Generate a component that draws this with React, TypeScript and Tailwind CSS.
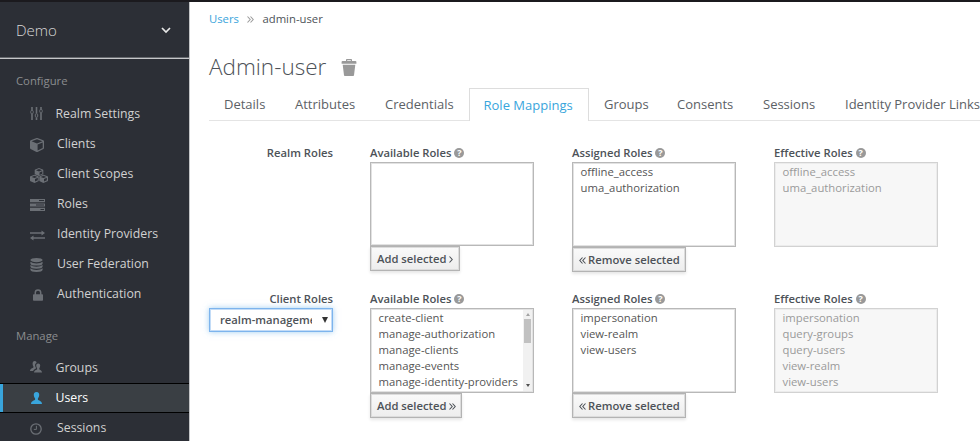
import React from "react";

type IconProps = { className?: string };

const Sliders = ({ className }: IconProps) => (
  <svg className={className} width="13" height="13" viewBox="0 0 13 13" fill="none" stroke="currentColor">
    <path d="M2 0v3.2M2 7v6M6.5 0v6.6M6.5 10.4V13M11 0v2.2M11 6v7" strokeWidth="1.6" />
    <rect x=".8" y="3.4" width="2.4" height="3.4" rx="1" />
    <rect x="5.3" y="6.8" width="2.4" height="3.4" rx="1" />
    <rect x="9.8" y="2.4" width="2.4" height="3.4" rx="1" />
  </svg>
);

const Cube = ({ className }: IconProps) => (
  <svg className={className} width="14" height="14" viewBox="0 0 14 14">
    <path
      fill="currentColor"
      fillRule="evenodd"
      d="M6.6.1q.4-.2.8 0l5.9 2.2q.7.3.7 1v6.8q0 .6-.6.9l-5.9 2.9q-.5.2-1 0L.6 11Q0 10.7 0 10.1V3.300q0-.7.7-1zM7 1.300L1.600 3.300 7 5.400l5.400-2.100zM7.600 6.500v5.900l5.100-2.500V4.500z"
    />
  </svg>
);

const Cubes = ({ className }: IconProps) => (
  <svg className={className} width="18" height="15" viewBox="0 0 18 15" fill="currentColor" fillRule="evenodd">
    <path d="M9 0l3.800 1.500q.5.200.5.700v4L9 8 4.700 6.200v-4q0-.5.500-.7zM9 1.100L6 2.300l3 1.200 3-1.200zM9.500 4.400v2.500l2.800-1.200V3.200z" />
    <path d="M4.600 6.700l3.700 1.500q.4.200.4.600v3.700q0 .5-.4.700L4.600 15 .5 13.200q-.5-.2-.5-.7V8.800q0-.5.500-.6zM4.500 7.800l-2.900 1.100 2.900 1.200 2.900-1.200zM5 11v2.600l2.800-1.300V9.800z" />
    <path d="M13.400 6.700l4.100 1.500q.5.200.5.600v3.700q0 .5-.5.700L13.400 15l-3.700-1.800q-.4-.2-.4-.7V8.800q0-.5.400-.6zM13.500 7.800l-2.900 1.100 2.900 1.200 2.900-1.200zM14 11v2.600l2.800-1.300V9.800z" />
  </svg>
);

const Bars = ({ className }: IconProps) => (
  <svg className={className} width="15" height="12" viewBox="0 0 15 12" fill="currentColor" fillRule="evenodd">
    <path d="M0 0h15v3.200H0zM9 1.100v1h5v-1zM0 4.400h15v3.200H0zM6 5.500v1h8v-1zM0 8.800h15V12H0zM10.500 9.900v1H14v-1z" />
  </svg>
);

const Exchange = ({ className }: IconProps) => (
  <svg className={className} width="15" height="11" viewBox="0 0 15 11" fill="currentColor">
    <path d="M0 2.300h11.500V.5L15 3l-3.500 2.500V3.700H0zM15 7.300H3.500V5.500L0 8l3.500 2.500V8.700H15z" />
  </svg>
);

const Database = ({ className }: IconProps) => (
  <svg className={className} width="13" height="14" viewBox="0 0 13 14" fill="currentColor">
    <ellipse cx="6.500" cy="2.100" rx="6.100" ry="2.100" />
    <path d="M.4 3.800q2 1.700 6.100 1.700t6.100-1.700v1.600q-.4 2.200-6.100 2.200T.4 5.400zM.4 7q2 1.700 6.100 1.700T12.600 7v1.600q-.4 2.200-6.100 2.200T.4 8.600zM.4 10.200q2 1.700 6.100 1.700t6.100-1.700v1.600q-.4 2.200-6.100 2.200T.4 11.800z" />
  </svg>
);

const Lock = ({ className }: IconProps) => (
  <svg className={className} width="10" height="12" viewBox="0 0 10 12">
    <path d="M2.300 6V3.600a2.700 2.700 0 0 1 5.400 0V6" fill="none" stroke="currentColor" strokeWidth="1.500" />
    <rect x="0" y="5.200" width="10" height="6.600" rx=".8" fill="currentColor" />
  </svg>
);

const User = ({ className }: IconProps) => (
  <svg className={className} width="11" height="12" viewBox="0 0 11 12" fill="currentColor">
    <path d="M5.500 0C7.600 0 8.400 1.400 8.200 3.300 8 5 7.300 6 6.900 6.600v1.200c.4.800 4.100 1.100 4.100 4.200H0c0-3.100 3.700-3.400 4.100-4.200V6.600C3.700 6 3 5 2.800 3.300 2.600 1.400 3.400 0 5.500 0z" />
  </svg>
);

const Group = ({ className }: IconProps) => (
  <svg className={className} width="12" height="12" viewBox="0 0 12 12" fill="currentColor">
    <path d="M4.700 0C6 0 6.600.8 6.500 2 5.200 2.300 4.900 3.600 5.200 5q.2 1 .7 1.600v1L4.200 8.500q-.9.500-1 1.500H0c0-2.600 2.900-2.700 3.400-3.500v-1C3 4.900 2.700 4 2.600 2.900 2.500 1.200 3.300 0 4.700 0z" />
    <path d="M8.200 2.400c1.500 0 2.100 1 2 2.400-.1 1.100-.5 1.900-.9 2.400v1c.4.900 2.700.8 2.700 3.400H4c0-2.500 2.700-2.500 3.100-3.400v-1c-.4-.5-.8-1.300-.9-2.400-.1-1.400.5-2.400 2-2.400z" />
  </svg>
);

const Clock = ({ className }: IconProps) => (
  <svg className={className} width="12" height="12" viewBox="0 0 12 12" fill="none" stroke="currentColor" strokeWidth="1.300">
    <circle cx="6" cy="6" r="5.200" />
    <path d="M6.400 2.800v3.600H3.800" strokeWidth="1" />
  </svg>
);

const Trash = () => (
  <svg width="16" height="17" viewBox="0 0 16 17" fill="#999">
    <path fillRule="evenodd" d="M5 2V.8Q5 0 5.800 0h4.400q.8 0 .8.800V2h3.500q.9 0 .9.900v1.800H.6V2.900q0-.9.900-.9zM6.200 1.200V2h3.600v-.8zM1.700 5.800h12.600L13 16.200q-.1.800-.8.800H3.800q-.7 0-.8-.8z" />
  </svg>
);

const Chevrons = ({ dir, count = 2 }: { dir: "left" | "right"; count?: number }) => (
  <svg
    width={count === 2 ? 7 : 4}
    height="7"
    viewBox={count === 2 ? "0 0 7 7" : "0 0 4 7"}
    fill="none"
    stroke="currentColor"
    strokeWidth="1.100"
    className={dir === "left" ? "shrink-0 rotate-180" : "shrink-0"}
  >
    <path d={count === 2 ? "M.5.5l2.700 3-2.700 3M3.500.5l2.700 3-2.700 3" : "M.5.5l2.700 3-2.700 3"} />
  </svg>
);

const Help = () => (
  <span className="flex size-[10px] items-center justify-center rounded-full bg-[#999] text-[9px] leading-none font-bold text-white">?</span>
);

type Item = { label: string; icon: React.FC<IconProps>; wide?: boolean; active?: boolean };

const NavItem = ({ label, icon: Icon, wide, active }: Item) => (
  <div
    className={
      active
        ? "flex h-[30px] shrink-0 items-center border-y border-black bg-[#3a3f44] text-white"
        : "flex h-[30px] shrink-0 items-center text-[#d1d1d1]"
    }
  >
    {active && <div className="h-full w-[3px] bg-[#39a5dc]" />}
    <div className={active ? "flex w-[52.500px] pl-[28px]" : wide ? "flex w-[57px] pl-[30px]" : "flex w-[55.500px] pl-[30px]"}>
      <Icon className={active ? "text-[#39a5dc]" : label === "Authentication" ? "mt-px ml-[3px] text-[#6b6f75]" : wide ? "mt-[2px] text-[#6b6f75]" : "-mt-[2px] text-[#6b6f75]"} />
    </div>
    <span className="text-[12.300px] leading-none whitespace-nowrap">{label}</span>
  </div>
);

const configure: Item[] = [
  { label: "Realm Settings", icon: Sliders },
  { label: "Clients", icon: Cube, wide: true },
  { label: "Client Scopes", icon: Cubes, wide: true },
  { label: "Roles", icon: Bars, wide: true },
  { label: "Identity Providers", icon: Exchange, wide: true },
  { label: "User Federation", icon: Database, wide: true },
  { label: "Authentication", icon: Lock, wide: true },
];

const manage: Item[] = [
  { label: "Groups", icon: Group },
  { label: "Users", icon: User, active: true },
  { label: "Sessions", icon: Clock, wide: true },
];

const Sidebar = () => (
  <aside className="flex h-[439px] w-[190px] shrink-0 flex-col overflow-hidden border-r border-[#c4c5c7] bg-[#2c2f36]">
    <div className="flex h-[57px] shrink-0 items-center justify-between border-b border-[#c6c7c9] pr-[18px] pl-4 text-[#d8d8d8] shadow-[inset_0_-1px_0_#66696e]">
      <span className="text-[15px] leading-none font-light">Demo</span>
      <svg width="10" height="7" viewBox="0 0 10 7" fill="none" stroke="#e8e8e8" strokeWidth="1.700">
        <path d="M1 1l4 4 4-4" />
      </svg>
    </div>
    <div className="flex h-[40px] shrink-0 items-center pt-[5px] pl-4 text-[11.300px] text-[#8b8d8f]">Configure</div>
    {configure.map((i) => <NavItem key={i.label} {...i} />)}
    <div className="flex h-[44px] shrink-0 items-center pt-[10px] pl-4 text-[11.300px] text-[#8b8d8f]">Manage</div>
    {manage.map((i) => <NavItem key={i.label} {...i} />)}
  </aside>
);

const tabs = [
  { label: "Details", width: "w-[71px]" },
  { label: "Attributes", width: "w-[90px]" },
  { label: "Credentials", width: "w-[99px]" },
  { label: "Role Mappings", width: "w-[120px]", active: true },
  { label: "Groups", width: "w-[73px]" },
  { label: "Consents", width: "w-[86px]" },
  { label: "Sessions", width: "w-[82px]" },
  { label: "Identity Provider Links", width: "w-[170px]" },
];

const Tabs = () => (
  <nav className="ml-[19px] flex h-[33px] overflow-hidden">
    {tabs.map((t) => (
      <div
        key={t.label}
        className={`flex shrink-0 items-center pt-px text-[13px] whitespace-nowrap ${t.width} ${
          t.active ? "border border-b-0 border-[#ddd] pl-[13.500px] text-[#39a5dc]" : "border-b border-[#e4e4e4] pl-[15px] text-[#5c6166]"
        }`}
      >
        {t.label}
      </div>
    ))}
  </nav>
);

type RoleBoxProps = {
  title: string;
  roles: string[];
  height?: string;
  disabled?: boolean;
  scroll?: boolean;
  action?: React.ReactNode;
};

const RoleBox = ({ title, roles, height = "h-[85px]", disabled, scroll, action }: RoleBoxProps) => (
  <div className="flex w-[164px] flex-col items-start">
    <div className="flex h-[19px] items-center gap-[3px] text-[11.250px] font-semibold text-[#4d5258]">
      <span className="pt-px">{title}</span>
      <Help />
    </div>
    <div
      className={`flex w-full overflow-hidden border p-px ${height} ${
        disabled
          ? "border-[#d2d2d2] bg-[#f7f7f7] text-[#9a9a9a] shadow-[inset_0_0_0_1px_#ececec]"
          : "border-[#b8b8b8] bg-white text-[#555] shadow-[inset_0_0_0_1px_#e2e2e2]"
      }`}
    >
      <div className="flex-1 pl-[6.500px] text-[11.300px] leading-[16px] whitespace-nowrap">
        {roles.map((r) => <div key={r}>{r}</div>)}
      </div>
      {scroll && (
        <div className="flex w-[9px] shrink-0 flex-col items-center bg-[#f1f1f1]">
          <div className="mt-[3px] border-x-[2.500px] border-b-[3px] border-x-transparent border-b-[#a3a3a3]" />
          <div className="mt-[3px] h-[24px] w-[7px] bg-[#c1c1c1]" />
          <div className="mt-auto mb-[4px] border-x-[2.500px] border-t-[3px] border-x-transparent border-t-[#505050]" />
        </div>
      )}
    </div>
    {action}
  </div>
);

const Button = ({ children, className }: { children: React.ReactNode; className: string }) => (
  <button className={`flex h-[25px] items-center border border-[#b3b3b3] bg-linear-to-b from-[#fafafa] to-[#ededed] pt-px pl-[6px] text-[11.250px] font-semibold whitespace-nowrap text-[#4d5258] shadow-[inset_0_0_0_1px_#dcdcdc,0_2px_3px_rgba(3,3,3,0.1)] ${className}`}>
    {children}
  </button>
);

const Remove = () => (
  <Button className="w-[114px] gap-[2px]"><Chevrons dir="left" />Remove selected</Button>
);

const Row = ({ label, children, control }: { label: string; children: React.ReactNode; control?: React.ReactNode }) => (
  <section className="flex h-[146px]">
    <div className="flex w-[143px] flex-col items-end">
      <div className="flex h-[19px] items-center pt-px text-[11.250px] font-semibold text-[#4d5258]">{label}</div>
      {control}
    </div>
    <div className="ml-[37px] flex gap-[38px]">{children}</div>
  </section>
);

export default function App() {
  return (
    <div className="flex h-[441px] w-[980px] flex-col overflow-hidden bg-white font-['Open_Sans',sans-serif]">
      <div className="h-[2px] shrink-0 bg-[#1b1a1e]" />
      <div className="flex">
        <Sidebar />
        <main className="flex w-[790px] flex-col">
          <div className="flex h-[34px] items-center gap-[8.500px] pt-px pl-[19px] text-[11.300px]">
            <span className="text-[#39a5dc]">Users</span>
            <span className="text-[#9c9c9c]"><Chevrons dir="right" /></span>
            <span className="-ml-[.5px] text-[#4d5258]">admin-user</span>
          </div>
          <div className="flex h-[52px] items-center gap-[15px] pt-[11px] pl-[19px]">
            <h1 className="text-[22.500px] leading-none font-light text-[#4d5258]">Admin-user</h1>
            <Trash />
          </div>
          <Tabs />
          <div className="flex flex-col pt-[22px]">
            <Row label="Realm Roles">
              <RoleBox title="Available Roles" roles={[]} height="h-[84px]" action={<Button className="w-[90px] gap-[3px]">Add selected<Chevrons dir="right" count={1} /></Button>} />
              <RoleBox title="Assigned Roles" roles={["offline_access", "uma_authorization"]} action={<Remove />} />
              <RoleBox title="Effective Roles" roles={["offline_access", "uma_authorization"]} disabled />
            </Row>
            <Row
              label="Client Roles"
              control={
                <div className="flex h-[24px] w-[124px] items-center justify-between border border-[#7db4ed] bg-white pr-[4px] pl-[10px] text-[11.250px] font-semibold text-[#4d5258] shadow-[inset_0_0_0_1px_#c3dcf7,0_0_6px_rgba(102,175,233,0.6)]">
                  <span className="w-[92px] overflow-hidden whitespace-nowrap">realm-management</span>
                  <svg width="6" height="6" viewBox="0 0 6 6"><path d="M0 0h6L3 6z" fill="#333" /></svg>
                </div>
              }
            >
              <RoleBox title="Available Roles" roles={["create-client", "manage-authorization", "manage-clients", "manage-events", "manage-identity-providers"]} scroll action={<Button className="w-[92px] gap-[3px]">Add selected<Chevrons dir="right" /></Button>} />
              <RoleBox title="Assigned Roles" roles={["impersonation", "view-realm", "view-users"]} action={<Remove />} />
              <RoleBox title="Effective Roles" roles={["impersonation", "query-groups", "query-users", "view-realm", "view-users"]} disabled />
            </Row>
          </div>
        </main>
      </div>
    </div>
  );
}
